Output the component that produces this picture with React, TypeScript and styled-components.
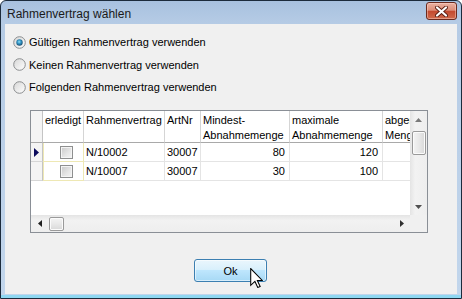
import React from "react";
import styled, { createGlobalStyle } from "styled-components";

const GlobalStyle = createGlobalStyle`
  html, body { margin: 0; padding: 0; background: #ffffff; overflow: hidden; }
  body { font-family: "Liberation Sans", Arial, sans-serif; }
  * { box-sizing: border-box; }
`;

const Window = styled.div`
  width: 462px;
  height: 299px;
  border: 1px solid #1c2b3c;
  border-radius: 6px 6px 0 0;
  background:
    linear-gradient(to top, #8fd8f2 0, #8fd8f2 3px, transparent 3px),
    linear-gradient(180deg, #a8c1df 0px, #b5cbe5 22px, #c2d6ec 100%);
  display: flex;
  flex-direction: column;
  padding: 0 4px 4px 4px;
`;

const TitleBar = styled.div`
  height: 23px;
  display: flex;
  align-items: flex-start;
  justify-content: space-between;
`;

const Title = styled.span`
  font-family: "Liberation Sans", Arial, sans-serif;
  font-size: 12px;
  line-height: 14px;
  color: #1a1a1a;
  padding: 6px 0 0 2px;
`;

const CloseButton = styled.div`
  margin-top: 1px;
  width: 31px;
  height: 18px;
  border: 1px solid #6b2a1e;
  border-radius: 3px;
  background: linear-gradient(180deg, #eab1a2 0%, #dd8d78 45%, #c44a2f 52%, #cf6a4c 100%);
  box-shadow: inset 0 0 0 1px rgba(255, 220, 210, 0.45);
  display: flex;
  align-items: center;
  justify-content: center;
`;

const Content = styled.div`
  flex: 1;
  background: #f0f0f0;
  display: flex;
  flex-direction: column;
  padding-top: 7px;
`;

const RadioRow = styled.label<{ $h: number }>`
  height: ${(p) => p.$h}px;
  display: flex;
  align-items: center;
  gap: 3px;
  padding-left: 8px;
  font-family: "Liberation Sans", Arial, sans-serif;
  font-size: 11px;
  color: #000;
`;

const GridBox = styled.div`
  margin: 12px 0 0 25px;
  width: 398px;
  height: 123px;
  border: 1px solid #8a8f96;
  display: grid;
  grid-template-columns: 1fr 17px;
  grid-template-rows: 1fr 17px;
  grid-template-areas: "view vs" "hs corner";
  background: #fff;
`;

const Viewport = styled.div`
  grid-area: view;
  overflow: hidden;
  background: #fff;
`;

const Table = styled.div`
  display: grid;
  grid-template-columns: 12px 41px 81px 36px 89px 93px 90px;
  width: max-content;
  font-family: "Liberation Sans", Arial, sans-serif;
  font-size: 11px;
  color: #000;
`;

const HeaderCell = styled.div<{ $corner?: boolean }>`
  height: 32px;
  border-right: 1px solid ${(p) => (p.$corner ? "#c4c4c4" : "#d5d5d5")};
  border-bottom: 1px solid #a9a9a9;
  padding: 2px 0 0 2px;
  line-height: 15px;
  white-space: nowrap;
  overflow: hidden;
  background: ${(p) => (p.$corner ? "#f4f4f4" : "#ffffff")};
`;

const RowHeaderCell = styled.div`
  height: 19px;
  border-right: 1px solid #c4c4c4;
  border-bottom: 1px solid #d6d6d6;
  background: #f4f4f4;
  display: flex;
  align-items: center;
  justify-content: center;
`;

const DataCell = styled.div<{ $right?: boolean; $check?: boolean }>`
  height: 19px;
  line-height: 18px;
  border-right: 1px solid ${(p) => (p.$check ? "#eee8b4" : "#e4e4e4")};
  border-bottom: 1px solid ${(p) => (p.$check ? "#eee8b4" : "#e4e4e4")};
  border-left: ${(p) => (p.$check ? "1px solid #eee8b4" : "none")};
  padding: ${(p) => (p.$right ? "0 4px 0 0" : "0 0 0 2px")};
  text-align: ${(p) => (p.$right ? "right" : "left")};
  white-space: nowrap;
  overflow: hidden;
  display: ${(p) => (p.$check ? "flex" : "block")};
  align-items: center;
  justify-content: center;
`;

const CheckBox = styled.span`
  width: 13px;
  height: 13px;
  border: 1px solid #8e8f8f;
  background: linear-gradient(135deg, #c9c9c9 0%, #e6e6e6 60%, #f4f4f4 100%);
  box-shadow: inset 0 0 0 1px #f4f4f4;
  margin-left: 3px;
`;

const VScroll = styled.div`
  grid-area: vs;
  display: flex;
  flex-direction: column;
  background: linear-gradient(90deg, #e4e4e4 0%, #f2f2f2 30%, #eeeeee 100%);
`;

const HScroll = styled.div`
  grid-area: hs;
  display: flex;
  flex-direction: row;
  background: linear-gradient(180deg, #e4e4e4 0%, #f2f2f2 30%, #eeeeee 100%);
`;

const Corner = styled.div`
  grid-area: corner;
  background: #f0f0f0;
`;

const ArrowBtn = styled.div`
  width: 17px;
  height: 17px;
  flex: none;
  display: flex;
  align-items: center;
  justify-content: center;
`;

const Track = styled.div<{ $vertical?: boolean }>`
  flex: 1;
  display: flex;
  flex-direction: ${(p) => (p.$vertical ? "column" : "row")};
  align-items: center;
`;

const Thumb = styled.div<{ $vertical?: boolean }>`
  width: ${(p) => (p.$vertical ? "14px" : "15px")};
  height: ${(p) => (p.$vertical ? "24px" : "14px")};
  margin: ${(p) => (p.$vertical ? "3px 0 0 0" : "0 0 0 1px")};
  border: 1px solid #9a9a9a;
  border-radius: 2px;
  background: ${(p) =>
    p.$vertical
      ? "linear-gradient(90deg, #f4f4f4 0%, #e8e8e8 50%, #d8d8d8 100%)"
      : "linear-gradient(180deg, #f4f4f4 0%, #e8e8e8 50%, #d8d8d8 100%)"};
  box-shadow: inset 0 0 0 1px #fbfbfb;
`;

const ButtonRow = styled.div`
  margin-top: 26px;
  display: flex;
  justify-content: center;
`;

const ButtonWrap = styled.div`
  position: relative;
  width: 73px;
  height: 23px;
  margin-right: 1px;
`;

const OkButton = styled.button`
  width: 73px;
  height: 23px;
  border: 1px solid #3c7fb1;
  border-radius: 3px;
  background: linear-gradient(180deg, #eaf6fd 0%, #d9f0fc 45%, #bee6fd 50%, #a7d9f5 100%);
  box-shadow: inset 0 0 0 1px rgba(255, 255, 255, 0.55);
  font-family: "Liberation Sans", Arial, sans-serif;
  font-size: 11px;
  color: #000;
  padding: 0;
`;

const Cursor = styled.svg`
  position: absolute;
  left: 56px;
  top: 9px;
`;

const RadioIcon = ({ checked }: { checked?: boolean }) => (
  <svg width="13" height="13" viewBox="0 0 13 13">
    <defs>
      <linearGradient id="rfill" x1="0" y1="0" x2="1" y2="1">
        <stop offset="0" stopColor="#d6d6d6" />
        <stop offset="1" stopColor="#ffffff" />
      </linearGradient>
      <radialGradient id="rdot" cx="0.45" cy="0.4" r="0.6">
        <stop offset="0" stopColor="#8fe0f8" />
        <stop offset="0.5" stopColor="#2e8fc0" />
        <stop offset="1" stopColor="#1b4d6e" />
      </radialGradient>
    </defs>
    <circle cx="6.5" cy="6.5" r="5.8" fill="url(#rfill)" stroke="#8b8d8f" strokeWidth="1" />
    {checked && <circle cx="6.5" cy="6.5" r="3.2" fill="url(#rdot)" />}
  </svg>
);

const Tri = ({ dir, color = "#404040" }: { dir: "up" | "down" | "left" | "right"; color?: string }) => {
  const pts = {
    up: "0,4 3.5,0 7,4",
    down: "0,0 7,0 3.5,4",
    left: "4,0 4,7 0,3.5",
    right: "0,0 0,7 4,3.5",
  }[dir];
  const vert = dir === "up" || dir === "down";
  return (
    <svg width={vert ? 7 : 4} height={vert ? 4 : 7} viewBox={vert ? "0 0 7 4" : "0 0 4 7"}>
      <polygon points={pts} fill={color} />
    </svg>
  );
};

type Row = { nr: string; art: string; min: string; max: string; selected?: boolean };

const rows: Row[] = [
  { nr: "N/10002", art: "30007", min: "80", max: "120", selected: true },
  { nr: "N/10007", art: "30007", min: "30", max: "100" },
];

export default function App() {
  return (
    <>
      <GlobalStyle />
      <Window>
        <TitleBar>
          <Title>Rahmenvertrag wählen</Title>
          <CloseButton>
            <svg width="13" height="11" viewBox="0 0 13 11">
              <path d="M2 1.5 L11 9.5 M11 1.5 L2 9.5" stroke="#5a1d12" strokeWidth="4" strokeLinecap="round" />
              <path d="M2 1.5 L11 9.5 M11 1.5 L2 9.5" stroke="#ffffff" strokeWidth="2.2" strokeLinecap="round" />
            </svg>
          </CloseButton>
        </TitleBar>
        <Content>
          <RadioRow $h={22}>
            <RadioIcon checked />
            <span>Gültigen Rahmenvertrag verwenden</span>
          </RadioRow>
          <RadioRow $h={23}>
            <RadioIcon />
            <span>Keinen Rahmenvertrag verwenden</span>
          </RadioRow>
          <RadioRow $h={22}>
            <RadioIcon />
            <span>Folgenden Rahmenvertrag verwenden</span>
          </RadioRow>

          <GridBox>
            <Viewport>
              <Table>
                <HeaderCell $corner />
                <HeaderCell>erledigt</HeaderCell>
                <HeaderCell>Rahmenvertrag</HeaderCell>
                <HeaderCell>ArtNr</HeaderCell>
                <HeaderCell>
                  Mindest-
                  <br />
                  Abnahmemenge
                </HeaderCell>
                <HeaderCell>
                  maximale
                  <br />
                  Abnahmemenge
                </HeaderCell>
                <HeaderCell>
                  abgerufene
                  <br />
                  Menge
                </HeaderCell>
                {rows.map((r) => (
                  <React.Fragment key={r.nr}>
                    <RowHeaderCell>
                      {r.selected && (
                        <svg width="5" height="9" viewBox="0 0 5 9">
                          <polygon points="0,0 5,4.5 0,9" fill="#0b0b5c" />
                        </svg>
                      )}
                    </RowHeaderCell>
                    <DataCell $check>
                      <CheckBox />
                    </DataCell>
                    <DataCell>{r.nr}</DataCell>
                    <DataCell>{r.art}</DataCell>
                    <DataCell $right>{r.min}</DataCell>
                    <DataCell $right>{r.max}</DataCell>
                    <DataCell />
                  </React.Fragment>
                ))}
              </Table>
            </Viewport>
            <VScroll>
              <ArrowBtn>
                <Tri dir="up" color="#7a7a7a" />
              </ArrowBtn>
              <Track $vertical>
                <Thumb $vertical />
              </Track>
              <ArrowBtn>
                <Tri dir="down" color="#505050" />
              </ArrowBtn>
            </VScroll>
            <HScroll>
              <ArrowBtn>
                <Tri dir="left" color="#202020" />
              </ArrowBtn>
              <Track>
                <Thumb />
              </Track>
              <ArrowBtn>
                <Tri dir="right" color="#303030" />
              </ArrowBtn>
            </HScroll>
            <Corner />
          </GridBox>

          <ButtonRow>
            <ButtonWrap>
              <OkButton>Ok</OkButton>
              <Cursor width="13" height="20" viewBox="0 0 12 19">
                <path
                  d="M0.5 0.5 L0.5 16.5 L4.5 12.8 L7.2 18.5 L9.5 17.5 L6.8 11.8 L11.5 11.8 Z"
                  fill="#ffffff"
                  stroke="#000000"
                  strokeWidth="1"
                  strokeLinejoin="miter"
                />
              </Cursor>
            </ButtonWrap>
          </ButtonRow>
        </Content>
      </Window>
    </>
  );
}
